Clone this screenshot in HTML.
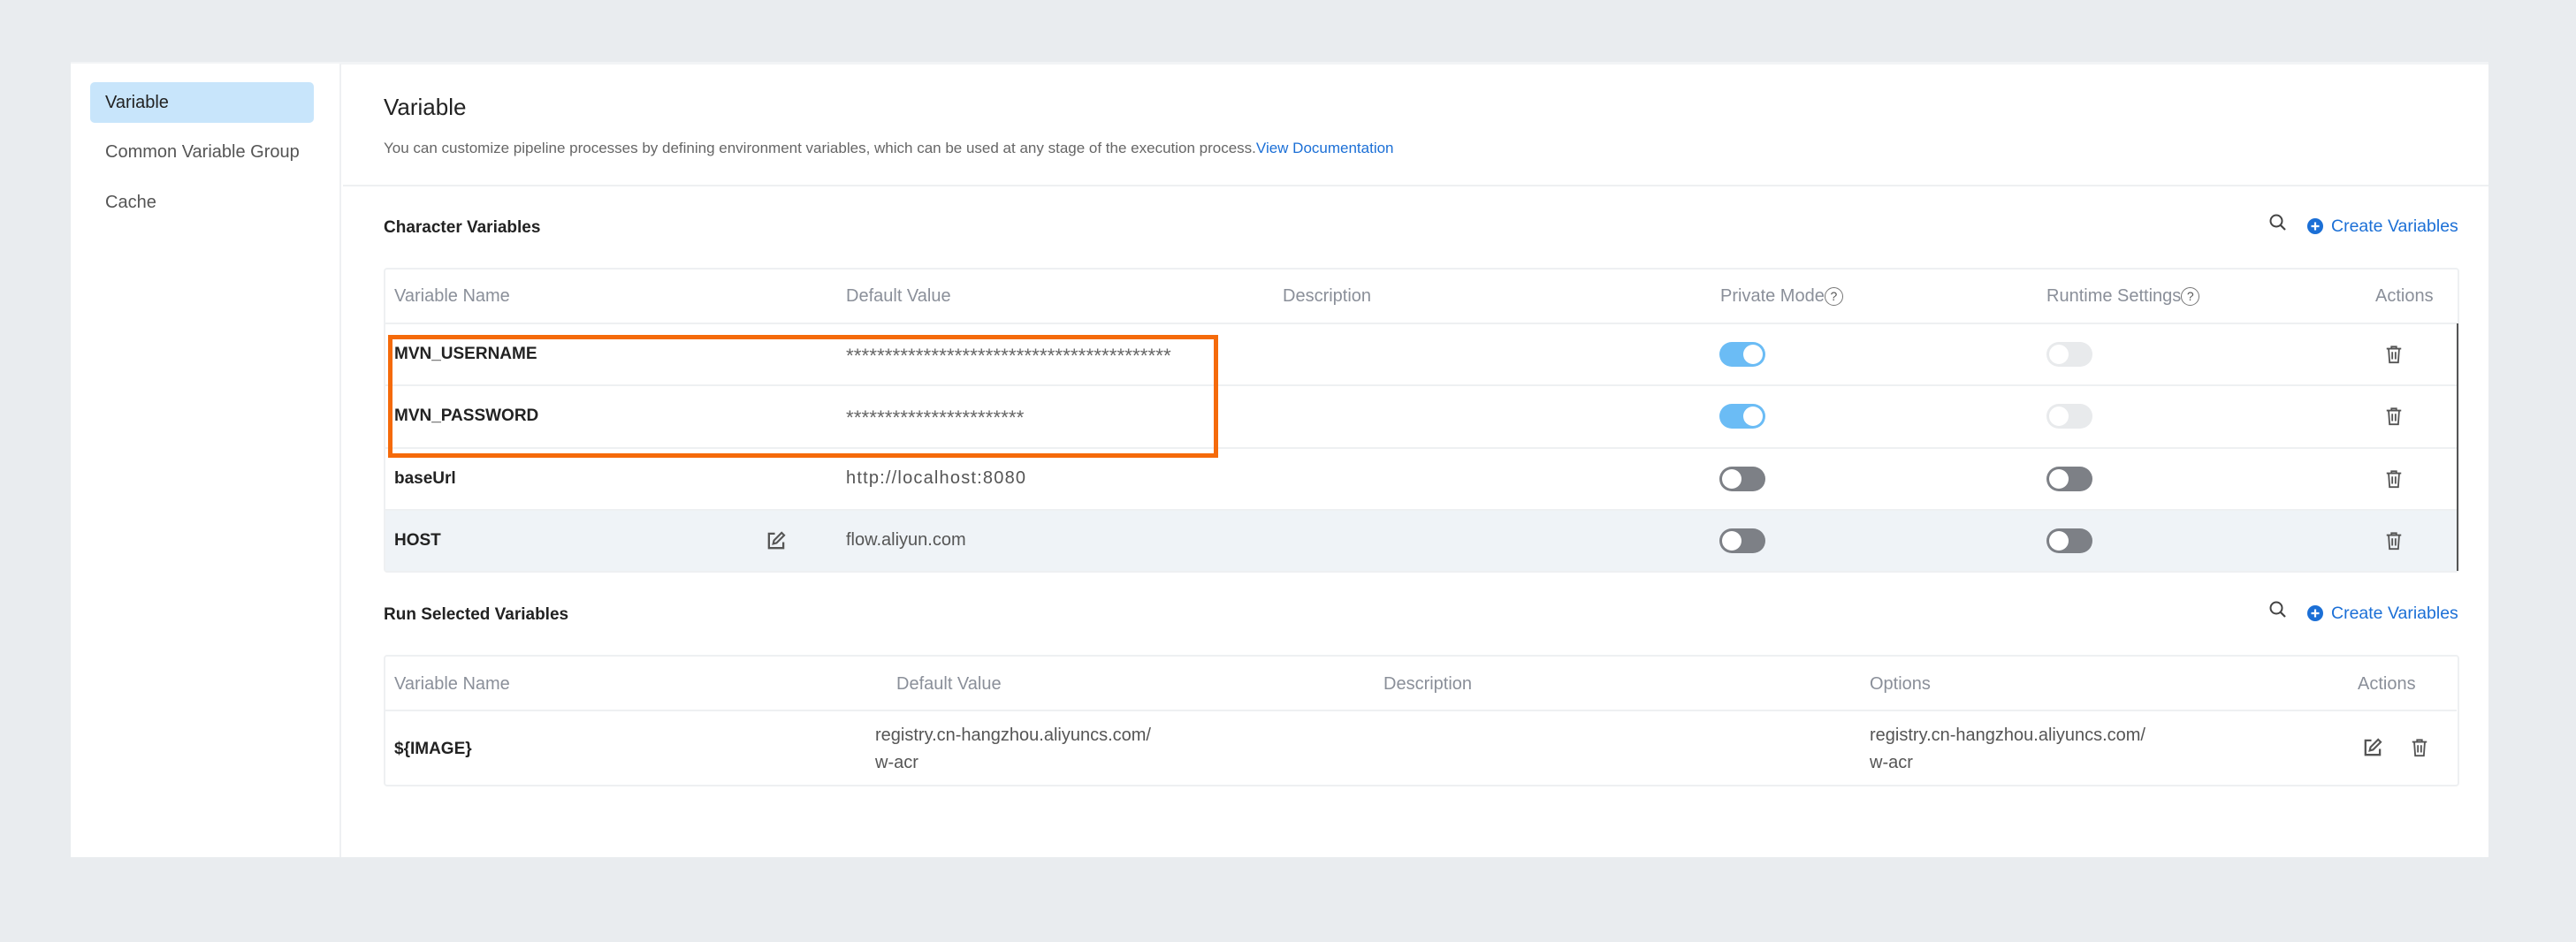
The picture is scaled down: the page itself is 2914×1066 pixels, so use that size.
<!DOCTYPE html>
<html><head><meta charset="utf-8">
<style>
*{margin:0;padding:0;box-sizing:border-box}
body{width:2914px;height:1066px;background:#e9ecef;font-family:"Liberation Sans",sans-serif;position:relative;overflow:hidden;color:#333}
.a{position:absolute;white-space:nowrap}
.panel{position:absolute;left:80px;top:70px;width:2735px;height:900px;background:#fff;border-top:3px solid #f2f4f6}
.side{position:absolute;left:80px;top:72px;width:306px;height:898px;background:#fff;border-right:2px solid #eef0f2}
.sb{font-size:20px;color:#555}
.hd{font-size:20px;color:#8a8f99}
.bd{font-size:19px;color:#222;font-weight:bold}
.v{font-size:20px;color:#555}
.tog{position:absolute;width:52px;height:28px;border-radius:14px}
.tog::after{content:"";position:absolute;top:3px;width:22px;height:22px;border-radius:50%;background:#fff}
.on{background:#6bbcf5}.on::after{right:3px}
.off{background:#7d8086}.off::after{left:3px}
.dis{background:#e8eaec}.dis::after{left:3px}
.line{position:absolute;height:2px;background:#eef0f2}
</style></head><body>
<div class="panel"></div>
<div class="side"></div>
<div class="a" style="left:102px;top:93px;width:253px;height:46px;background:#c8e5fb;border-radius:5px"></div>
<div class="a sb" style="left:119px;top:105px;color:#222">Variable</div>
<div class="a sb" style="left:119px;top:161px">Common Variable Group</div>
<div class="a sb" style="left:119px;top:218px">Cache</div>

<div class="a" style="left:434px;top:106px;font-size:26px;color:#222">Variable</div>
<div class="a" style="left:434px;top:158px;font-size:17px;color:#666">You can customize pipeline processes by defining environment variables, which can be used at any stage of the execution process.<span style="color:#1b6fd6">View Documentation</span></div>
<div class="line" style="left:388px;top:209px;width:2427px"></div>

<div class="a bd" style="left:434px;top:247px">Character Variables</div>
<svg class="a" style="left:2565px;top:240px" width="24" height="24" viewBox="0 0 24 24"><circle cx="10" cy="10" r="6.5" fill="none" stroke="#444" stroke-width="2"/><path d="M15 15l5 5" stroke="#444" stroke-width="2.2"/></svg>
<svg class="a" style="left:2609px;top:246px" width="20" height="20" viewBox="0 0 20 20"><circle cx="10" cy="10" r="9" fill="#1b6fd6"/><path d="M10 5.5v9M5.5 10h9" stroke="#fff" stroke-width="2.2"/></svg>
<div class="a" style="left:2637px;top:245px;font-size:19.5px;color:#1b6fd6">Create Variables</div>

<div class="a" style="left:434px;top:303px;width:2348px;height:345px;border:2px solid #eef0f2;border-radius:4px"></div>
<div class="a" style="left:436px;top:577px;width:2343px;height:69px;background:#eff3f7"></div>
<div class="line" style="left:436px;top:365px;width:2343px"></div>
<div class="line" style="left:436px;top:435px;width:2343px"></div>
<div class="line" style="left:436px;top:506px;width:2343px"></div>
<div class="line" style="left:436px;top:576px;width:2343px"></div>
<div class="a" style="left:2779px;top:366px;width:2px;height:280px;background:#555"></div>
<div class="a hd" style="left:446px;top:324px">Variable Name</div>
<div class="a hd" style="left:957px;top:324px">Default Value</div>
<div class="a hd" style="left:1451px;top:324px">Description</div>
<div class="a hd" style="left:1946px;top:324px">Private Mode<span style="display:inline-block;width:21px;height:21px;border:1.5px solid #777;border-radius:50%;font-size:14px;text-align:center;line-height:18px;color:#555;vertical-align:1px">?</span></div>
<div class="a hd" style="left:2315px;top:324px">Runtime Settings<span style="display:inline-block;width:21px;height:21px;border:1.5px solid #777;border-radius:50%;font-size:14px;text-align:center;line-height:18px;color:#555;vertical-align:1px">?</span></div>
<div class="a hd" style="left:2687px;top:324px">Actions</div>

<div class="a bd" style="left:446px;top:390px">MVN_USERNAME</div>
<div class="a bd" style="left:446px;top:460px">MVN_PASSWORD</div>
<div class="a bd" style="left:446px;top:531px">baseUrl</div>
<div class="a bd" style="left:446px;top:601px">HOST</div>
<div class="a v" style="left:957px;top:390px;font-size:22.5px;color:#666">******************************************</div>
<div class="a v" style="left:957px;top:460px;font-size:22.5px;color:#666">***********************</div>
<div class="a v" style="left:957px;top:530px;letter-spacing:1.2px">http://localhost:8080</div>
<div class="a v" style="left:957px;top:600px">flow.aliyun.com</div>
<svg class="a" style="left:866px;top:601px" width="23" height="23" viewBox="0 0 24 24"><path d="M11 3H4v17h17v-7" fill="none" stroke="#555" stroke-width="2.4"/><path d="M9 15l1-4 9-9 3 3-9 9z" fill="none" stroke="#555" stroke-width="2.2"/></svg>

<div class="tog on" style="left:1945px;top:387px"></div>
<div class="tog on" style="left:1945px;top:457px"></div>
<div class="tog off" style="left:1945px;top:528px"></div>
<div class="tog off" style="left:1945px;top:598px"></div>
<div class="tog dis" style="left:2315px;top:387px"></div>
<div class="tog dis" style="left:2315px;top:457px"></div>
<div class="tog off" style="left:2315px;top:528px"></div>
<div class="tog off" style="left:2315px;top:598px"></div>

<svg width="0" height="0" style="position:absolute"><defs><symbol id="tr" viewBox="0 0 24 24"><path d="M3 5h18M9 5V2.5h6V5M5.5 5l1.2 17h10.6L18.5 5M10 9v9M14 9v9" fill="none" stroke="#555" stroke-width="2"/></symbol></defs></svg>
<svg class="a" style="left:2697px;top:389px" width="22" height="24"><use href="#tr"/></svg>
<svg class="a" style="left:2697px;top:459px" width="22" height="24"><use href="#tr"/></svg>
<svg class="a" style="left:2697px;top:530px" width="22" height="24"><use href="#tr"/></svg>
<svg class="a" style="left:2697px;top:600px" width="22" height="24"><use href="#tr"/></svg>

<div class="a" style="left:439px;top:379px;width:939px;height:139px;border:5px solid #f56a0a"></div>

<div class="a bd" style="left:434px;top:685px">Run Selected Variables</div>
<svg class="a" style="left:2565px;top:678px" width="24" height="24" viewBox="0 0 24 24"><circle cx="10" cy="10" r="6.5" fill="none" stroke="#444" stroke-width="2"/><path d="M15 15l5 5" stroke="#444" stroke-width="2.2"/></svg>
<svg class="a" style="left:2609px;top:684px" width="20" height="20" viewBox="0 0 20 20"><circle cx="10" cy="10" r="9" fill="#1b6fd6"/><path d="M10 5.5v9M5.5 10h9" stroke="#fff" stroke-width="2.2"/></svg>
<div class="a" style="left:2637px;top:683px;font-size:19.5px;color:#1b6fd6">Create Variables</div>

<div class="a" style="left:434px;top:741px;width:2348px;height:149px;border:2px solid #eef0f2;border-radius:4px"></div>
<div class="line" style="left:436px;top:803px;width:2343px"></div>
<div class="a hd" style="left:446px;top:763px">Variable Name</div>
<div class="a hd" style="left:1014px;top:763px">Default Value</div>
<div class="a hd" style="left:1565px;top:763px">Description</div>
<div class="a hd" style="left:2115px;top:763px">Options</div>
<div class="a hd" style="left:2667px;top:763px">Actions</div>
<div class="a bd" style="left:446px;top:837px">${IMAGE}</div>
<div class="a v" style="left:990px;top:821px;width:322px;overflow:hidden">registry.cn-hangzhou.aliyuncs.com/</div>
<div class="a v" style="left:990px;top:852px">w-acr</div>
<div class="a v" style="left:2115px;top:821px">registry.cn-hangzhou.aliyuncs.com/</div>
<div class="a v" style="left:2115px;top:852px">w-acr</div>
<svg class="a" style="left:2672px;top:835px" width="23" height="23" viewBox="0 0 24 24"><path d="M11 3H4v17h17v-7" fill="none" stroke="#555" stroke-width="2.4"/><path d="M9 15l1-4 9-9 3 3-9 9z" fill="none" stroke="#555" stroke-width="2.2"/></svg>
<svg class="a" style="left:2726px;top:834px" width="22" height="24"><use href="#tr"/></svg>
</body></html>
